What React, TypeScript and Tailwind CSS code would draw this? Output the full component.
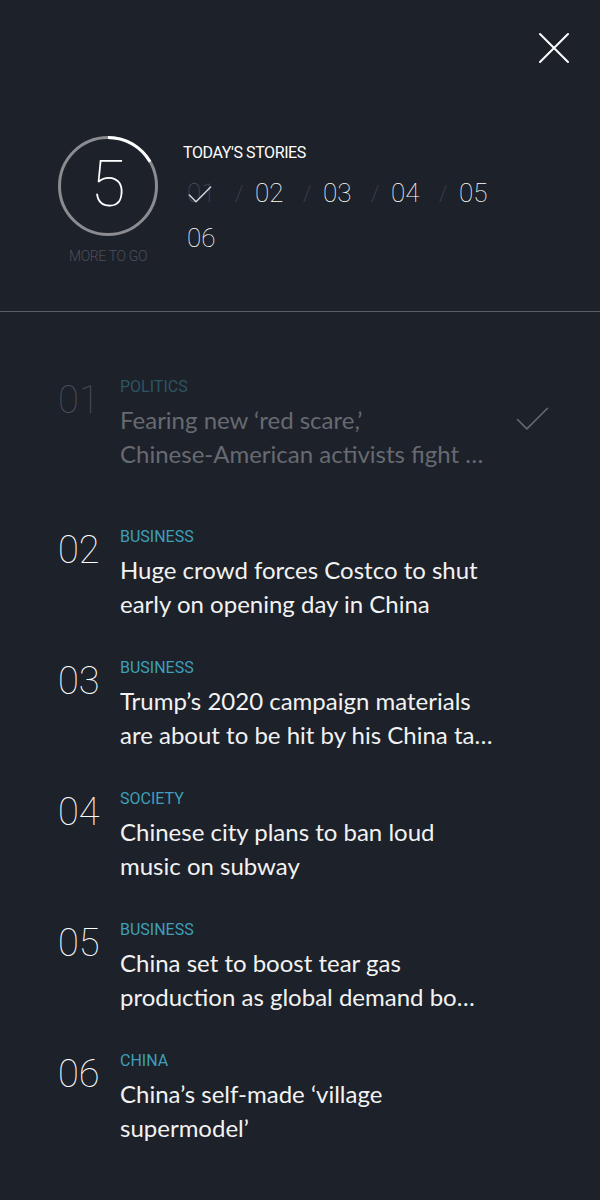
import { Check } from 'lucide-react';

const stories = [
  { n: '01', cat: 'POLITICS', lines: ['Fearing new ‘red scare,’', 'Chinese‑American activists fight …'], read: true },
  { n: '02', cat: 'BUSINESS', lines: ['Huge crowd forces Costco to shut', 'early on opening day in China'] },
  { n: '03', cat: 'BUSINESS', lines: ['Trump’s 2020 campaign materials', 'are about to be hit by his China ta…'] },
  { n: '04', cat: 'SOCIETY', lines: ['Chinese city plans to ban loud', 'music on subway'] },
  { n: '05', cat: 'BUSINESS', lines: ['China set to boost tear gas', 'production as global demand bo…'] },
  { n: '06', cat: 'CHINA', lines: ['China’s self-made ‘village', 'supermodel’'] },
];

function Progress() {
  const r = 48.5;
  const c = 2 * Math.PI * r;
  return (
    <div className="flex flex-col items-center w-[100px]">
      <div className="relative w-[100px] h-[100px]">
        <svg width="100" height="100" viewBox="0 0 100 100" className="absolute inset-0">
          <circle cx="50" cy="50" r={r} fill="none" stroke="#8b8c90" strokeWidth="3" />
          <circle
            cx="50"
            cy="50"
            r={r}
            fill="none"
            stroke="#ffffff"
            strokeWidth="3"
            strokeDasharray={`${c / 6} ${c}`}
            transform="rotate(-90 50 50)"
          />
        </svg>
        <div className="absolute inset-0 flex items-center justify-center text-[64px] font-thin leading-none text-white pb-[2px]">
          5
        </div>
      </div>
      <div className="mt-[12px] text-[14px] leading-[16px] font-light text-[#4b4f58] tracking-tight">MORE TO GO</div>
    </div>
  );
}

function Num({ n, done }: { n: string; done?: boolean }) {
  return (
    <div className="relative w-[48px] text-[26px] font-thin leading-[45px]">
      <span className={done ? 'text-[#4b5059]' : 'text-white'}>{n}</span>
      {done && <Check className="absolute left-[-3px] top-[8px] w-[32px] h-[32px] text-[#d4d5d8]" strokeWidth={1.1} />}
    </div>
  );
}

function Slash() {
  return <div className="w-[20px] text-[22px] font-thin leading-[45px] text-[#4d5058]">/</div>;
}

export default function App() {
  return (
    <div className="min-h-screen bg-[#1d212a] text-white font-['Roboto',sans-serif] pb-[40px]">
      <div className="flex justify-end pt-[32px] pr-[30px]">
        <svg width="32" height="32" viewBox="0 0 32 32" className="text-white">
          <path d="M2 2L30 30M30 2L2 30" stroke="currentColor" strokeWidth="2" strokeLinecap="round" />
        </svg>
      </div>

      <div className="flex pl-[58px] pt-[72px] pb-[47px] border-b border-[#5b5e64]">
        <Progress />
        <div className="ml-[25px] pt-[7px]">
          <div className="text-[16px] leading-[20px] text-white tracking-tight">TODAY'S STORIES</div>
          <div className="pl-[4px] pt-[8px]">
            <div className="flex">
              <Num n="01" done />
              <Slash />
              <Num n="02" />
              <Slash />
              <Num n="03" />
              <Slash />
              <Num n="04" />
              <Slash />
              <Num n="05" />
            </div>
            <div className="flex">
              <Num n="06" />
            </div>
          </div>
        </div>
      </div>

      <div className="flex flex-col gap-[37px] pt-[65px] pl-[58px]">
        {stories.map((s) => (
          <div key={s.n} className={`flex items-start ${s.read ? 'mb-[19px]' : ''}`}>
            <div
              className={`w-[62px] text-[38px] font-thin leading-[46px] ${
                s.read ? 'text-[#4a4e56]' : 'text-white'
              }`}
            >
              {s.n}
            </div>
            <div className="w-[380px]">
              <div
                className={`text-[16px] leading-[20px] ${s.read ? 'text-[#2e5562]' : 'text-[#3f9fb8]'}`}
              >
                {s.cat}
              </div>
              <div
                className={`mt-[6px] font-['Lato',sans-serif] text-[24px] leading-[34px] whitespace-nowrap ${
                  s.read ? 'text-[#676a70]' : 'text-[#f2f2f2]'
                }`}
              >
                {s.lines.map((l) => (
                  <div key={l}>{l}</div>
                ))}
              </div>
            </div>
            {s.read && (
              <div className="ml-[10px] pt-[20px]">
                <Check className="w-[45px] h-[45px] text-[#676a70]" strokeWidth={0.8} />
              </div>
            )}
          </div>
        ))}
      </div>
    </div>
  );
}
